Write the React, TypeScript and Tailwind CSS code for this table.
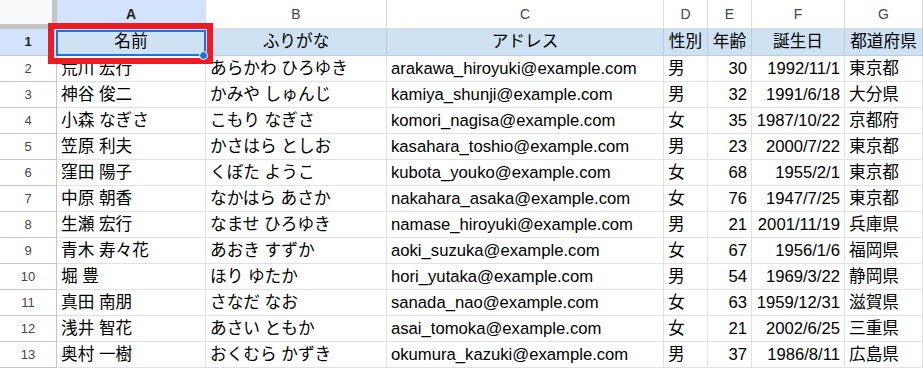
const font = { fontFamily: "'Liberation Sans', 'Noto Sans CJK JP', sans-serif" };

type Col = { key: string; w: string; align: 'left' | 'right' };

const cols: Col[] = [
  { key: 'A', w: 'w-[149px]', align: 'left' },
  { key: 'B', w: 'w-[181px]', align: 'left' },
  { key: 'C', w: 'w-[277px]', align: 'left' },
  { key: 'D', w: 'w-[44px]', align: 'left' },
  { key: 'E', w: 'w-[44px]', align: 'right' },
  { key: 'F', w: 'w-[93px]', align: 'right' },
  { key: 'G', w: 'w-[78px]', align: 'left' },
];

const titles = ['名前', 'ふりがな', 'アドレス', '性別', '年齢', '誕生日', '都道府県'];

const rows: string[][] = [
  ['荒川 宏行', 'あらかわ ひろゆき', 'arakawa_hiroyuki@example.com', '男', '30', '1992/11/1', '東京都'],
  ['神谷 俊二', 'かみや しゅんじ', 'kamiya_shunji@example.com', '男', '32', '1991/6/18', '大分県'],
  ['小森 なぎさ', 'こもり なぎさ', 'komori_nagisa@example.com', '女', '35', '1987/10/22', '京都府'],
  ['笠原 利夫', 'かさはら としお', 'kasahara_toshio@example.com', '男', '23', '2000/7/22', '東京都'],
  ['窪田 陽子', 'くぼた ようこ', 'kubota_youko@example.com', '女', '68', '1955/2/1', '東京都'],
  ['中原 朝香', 'なかはら あさか', 'nakahara_asaka@example.com', '女', '76', '1947/7/25', '東京都'],
  ['生瀬 宏行', 'なませ ひろゆき', 'namase_hiroyuki@example.com', '男', '21', '2001/11/19', '兵庫県'],
  ['青木 寿々花', 'あおき すずか', 'aoki_suzuka@example.com', '女', '67', '1956/1/6', '福岡県'],
  ['堀 豊', 'ほり ゆたか', 'hori_yutaka@example.com', '男', '54', '1969/3/22', '静岡県'],
  ['真田 南朋', 'さなだ なお', 'sanada_nao@example.com', '女', '63', '1959/12/31', '滋賀県'],
  ['浅井 智花', 'あさい ともか', 'asai_tomoka@example.com', '女', '21', '2002/6/25', '三重県'],
  ['奥村 一樹', 'おくむら かずき', 'okumura_kazuki@example.com', '男', '37', '1986/8/11', '広島県'],
];

export default function App() {
  return (
    <div className="relative w-[923px] h-[368px] overflow-hidden bg-white" style={font}>
      {/* column letters */}
      <div className="flex h-[29px]">
        <div className="w-[57px] shrink-0 h-full bg-[#c4c4c4]">
          <div className="w-[52px] h-[24px] bg-[#f8f9fa]" />
        </div>
        {cols.map((c) => (
          <div
            key={c.key}
            className={`${c.w} shrink-0 h-full flex items-center justify-center border-r border-b border-[#dadce0] text-[14px] ${
              c.key === 'A' ? 'bg-[#d3e3fd] font-bold text-[#1f1f1f]' : 'text-[#444746]'
            }`}
          >
            {c.key}
          </div>
        ))}
      </div>

      {/* title row */}
      <div className="flex h-[27px]">
        <div className="w-[57px] shrink-0 h-full flex items-center justify-center bg-[#d3e3fd] border-r border-b border-[#c4c7c5] text-[13px] font-bold text-[#1f1f1f]">
          1
        </div>
        {cols.map((c, i) => (
          <div
            key={c.key}
            className={`${c.w} relative shrink-0 h-full flex items-center justify-center bg-[#cfe2f3] border-r border-b border-[#bfcbd7] text-[16.67px] leading-[20px] text-black whitespace-nowrap`}
          >
            {titles[i]}
            {i === 0 && (
              <>
                <div className="absolute left-[-1px] top-[1px] right-[-1px] bottom-[-1px] border-2 border-[#1a73e8]" />
                <div className="absolute z-10 right-[-3px] bottom-[-5px] w-[9px] h-[9px] rounded-full bg-[#1a73e8] border border-white" />
              </>
            )}
          </div>
        ))}
      </div>

      {/* data rows */}
      {rows.map((r, ri) => (
        <div key={ri} className="flex h-[26px]">
          <div className="w-[57px] shrink-0 h-full flex items-center justify-center border-r border-b border-[#c4c7c5] text-[13px] text-[#444746]">
            {ri + 2}
          </div>
          {cols.map((c, ci) => (
            <div
              key={c.key}
              className={`${c.w} shrink-0 h-full flex items-center pt-[1px] border-r border-b border-[#e1e1e1] text-[16.67px] leading-[20px] text-black whitespace-nowrap overflow-hidden ${
                c.align === 'right' ? 'justify-end pr-[4px]' : 'pl-[4px]'
              }`}
            >
              {r[ci]}
            </div>
          ))}
        </div>
      ))}

      {/* highlight frame */}
      <div className="absolute left-[48px] top-[23px] w-[165px] h-[41px] border-[6px] border-[#ed1c24]" />
    </div>
  );
}
